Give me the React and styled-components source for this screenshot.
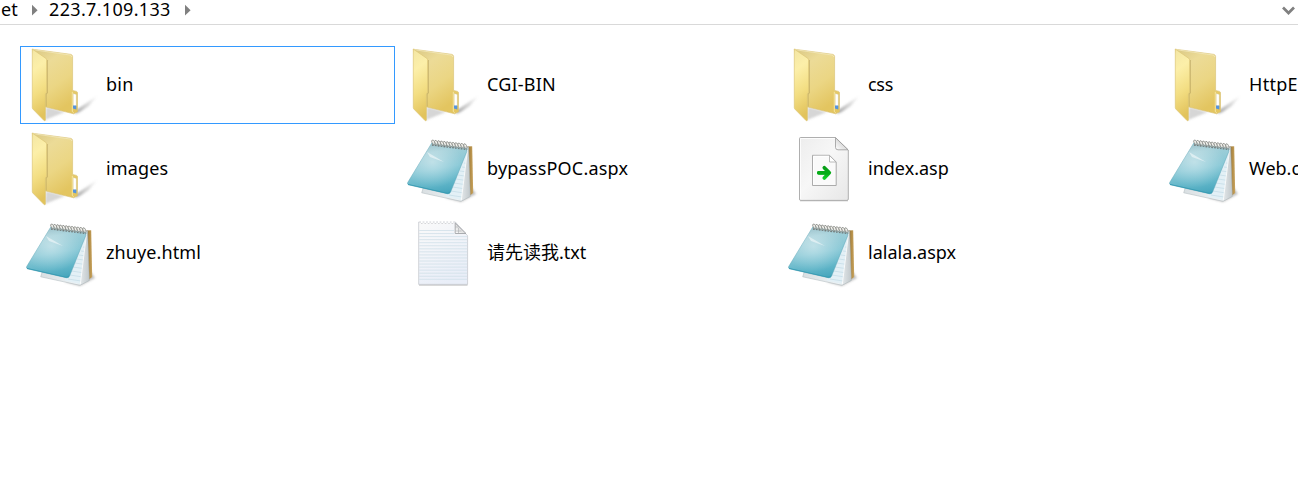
import React from "react";
import styled, { createGlobalStyle } from "styled-components";

const GlobalStyle = createGlobalStyle`
  * { box-sizing: border-box; }
  html, body { margin: 0; background: #fff; overflow: hidden; }
  body { font-family: "Noto Sans", "Noto Sans CJK SC", sans-serif; font-size: 18px; color: #000; }
`;

const Window = styled.main`
  width: 100vw;
  height: 492px;
  overflow: hidden;
  background: #fff;
`;

const AddressBar = styled.header`
  display: flex;
  align-items: flex-start;
  height: 25px;
  border-bottom: 1px solid #d9d9d9;
  padding-right: 3px;
`;

const Crumb = styled.span`
  width: ${(p) => p.$width}px;
  height: 24px;
  margin-left: ${(p) => p.$gap || 0}px;
  line-height: 18px;
  white-space: nowrap;
  letter-spacing: ${(p) => p.$tracking || 0}px;
`;

const Separator = styled.svg`
  width: 8px;
  height: 14px;
  margin: 3px 0 0 ${(p) => p.$gap}px;
  flex: none;
`;

const Chevron = styled.svg`
  width: 14px;
  height: 12px;
  margin: 5px 0 0 auto;
  flex: none;
`;

const FileGrid = styled.ul`
  list-style: none;
  margin: 0;
  padding: 21px 0 0 20px;
  display: grid;
  grid-template-columns: repeat(4, 375px);
  grid-auto-rows: 78px;
  gap: 6px;
`;

const Tile = styled.li`
  display: flex;
  align-items: center;
  outline: ${(p) => (p.$selected ? "1px solid #3399ff" : "none")};
  outline-offset: -1px;
`;

const IconArt = styled.svg`
  width: 80px;
  height: 78px;
  flex: none;
`;

const FileName = styled.span`
  margin-left: 6px;
  line-height: 24px;
  padding-bottom: 3px;
  white-space: nowrap;
  letter-spacing: ${(p) => p.$tracking || 0}px;
`;

function Gradients() {
  return (
    <svg width="0" height="0" style={{ display: "block" }} aria-hidden="true">
      <defs>
        <linearGradient id="folderBack" x1="0" y1="0" x2="0.5" y2="1">
          <stop offset="0" stopColor="#d9c783" />
          <stop offset="0.3" stopColor="#ecdb97" />
          <stop offset="0.65" stopColor="#ebd684" />
          <stop offset="1" stopColor="#e3c560" />
        </linearGradient>
        <linearGradient id="folderFlap" x1="0" y1="0" x2="0.15" y2="1">
          <stop offset="0" stopColor="#f3e6a4" />
          <stop offset="0.3" stopColor="#fcefa9" />
          <stop offset="0.65" stopColor="#f3de83" />
          <stop offset="1" stopColor="#e2c35c" />
        </linearGradient>
        <linearGradient id="folderShade" x1="0" y1="0" x2="1" y2="0">
          <stop offset="0" stopColor="#666" stopOpacity="0.6" />
          <stop offset="1" stopColor="#999" stopOpacity="0.08" />
        </linearGradient>
        <linearGradient id="padCover" x1="0.4" y1="0" x2="0.6" y2="1">
          <stop offset="0" stopColor="#8fb9c3" />
          <stop offset="0.18" stopColor="#9fced8" />
          <stop offset="0.5" stopColor="#88c8d6" />
          <stop offset="0.8" stopColor="#60b5c8" />
          <stop offset="1" stopColor="#46a5bc" />
        </linearGradient>
        <radialGradient id="padGlow" cx="0.42" cy="0.38" r="0.5">
          <stop offset="0" stopColor="#fff" stopOpacity="0.42" />
          <stop offset="1" stopColor="#fff" stopOpacity="0" />
        </radialGradient>
        <linearGradient id="padPages" x1="0" y1="0" x2="1" y2="0">
          <stop offset="0" stopColor="#d9dfe2" />
          <stop offset="0.75" stopColor="#eef2f4" />
          <stop offset="1" stopColor="#c1c8cb" />
        </linearGradient>
        <linearGradient id="padWood" x1="0" y1="0" x2="1" y2="0">
          <stop offset="0" stopColor="#80642e" />
          <stop offset="0.5" stopColor="#b18b45" />
          <stop offset="1" stopColor="#c9a560" />
        </linearGradient>
        <linearGradient id="sheet" x1="0" y1="0" x2="1" y2="1">
          <stop offset="0" stopColor="#ededed" />
          <stop offset="0.45" stopColor="#f7f7f7" />
          <stop offset="1" stopColor="#e7e7e7" />
        </linearGradient>
        <linearGradient id="fold" x1="0" y1="1" x2="1" y2="0">
          <stop offset="0" stopColor="#fff" />
          <stop offset="0.5" stopColor="#ddd" />
          <stop offset="1" stopColor="#aaa" />
        </linearGradient>
        <linearGradient id="arrow" x1="0" y1="36" x2="0" y2="50" gradientUnits="userSpaceOnUse">
          <stop offset="0" stopColor="#079a16" />
          <stop offset="0.5" stopColor="#07ac18" />
          <stop offset="1" stopColor="#16da2c" />
        </linearGradient>
        <linearGradient id="textSheet" x1="0" y1="0" x2="0.5" y2="1">
          <stop offset="0" stopColor="#fafafa" />
          <stop offset="1" stopColor="#e9eef8" />
        </linearGradient>
        <filter id="soft" x="-20%" y="-20%" width="140%" height="140%">
          <feGaussianBlur stdDeviation="1" />
        </filter>
        <filter id="glint" x="-20%" y="-20%" width="140%" height="140%">
          <feGaussianBlur stdDeviation="0.7" />
        </filter>
      </defs>
    </svg>
  );
}

function FolderIcon() {
  return (
    <IconArt viewBox="0 0 80 78">
      <path d="M56 64 L77 50 L69 60 L60 66 L55 68Z" fill="url(#folderShade)" filter="url(#soft)" />
      <path d="M26 61 L45 66 L25 74Z" fill="#777" fillOpacity="0.3" filter="url(#soft)" />
      <path d="M12.3 3.2 L50.5 8.3 Q52.6 8.7 52.6 10.5 V44.4 L56.5 45.4 Q57.5 45.8 57.5 46.7 V65.8 L53.6 67.8 L25 60.8Z" fill="url(#folderBack)" stroke="#d9bf70" strokeWidth="0.6" />
      <path d="M13 3.7 L50 9 Q51.7 9.4 51.7 11" fill="none" stroke="#f3e8bb" strokeWidth="0.8" />
      <path d="M52.3 45.8 V65.5 L53.7 66.7" fill="none" stroke="#f7e9a9" strokeWidth="0.9" />
      <path d="M53.2 47.6 L56.3 48.4 V60 H53.2Z" fill="#fff" stroke="#c7bd92" strokeWidth="0.3" />
      <path d="M53 59.5 H56.3 V63.4 L53 62.6Z" fill="#5694dd" />
      <path d="M27.3 14 V46.5 L26 48.5 V60.5" fill="none" stroke="#a28e4c" strokeOpacity="0.45" strokeWidth="1.2" />
      <path d="M12.3 3.1 L25.6 12.2 Q26.6 13 26.6 14.3 V46.2 L25.4 48 V74.3 Q25 75 24 74.5 L12.8 63 Q12.3 62.4 12.3 61.5Z" fill="url(#folderFlap)" stroke="#dcc575" strokeWidth="0.7" />
    </IconArt>
  );
}

const RINGS = Array.from({ length: 12 }, (_, i) => i);

function NotepadIcon() {
  return (
    <IconArt viewBox="0 0 80 78">
      <path d="M45 68 L60 72 L75 64 L71 58Z" fill="#777" fillOpacity="0.45" filter="url(#soft)" />
      <path d="M66.5 16.5 L71.2 16.3 L72.2 63 L67.5 66.5Z" fill="url(#padWood)" />
      <path d="M62 16 L67.6 17 L69.3 66.5 L60 71.3 L20.7 62.8 L22 58.5Z" fill="url(#padPages)" stroke="#a9b4b9" strokeWidth="0.5" />
      <path d="M66.2 20 L60.2 70 L44.5 66.4 L62 29Z" fill="#e3f0f6" />
      <path d="M63 33l2 .3M61 37l3.5.5M59 41l5 .7M57 45l6.5 1M55 49l8 1.2M53 53l9.5 1.4M51.5 57l10.5 1.6M50 61l11.5 1.8M48 65l13 2" stroke="#bcd7e3" strokeWidth="0.6" />
      <path d="M66.5 20 L60.3 70.3" stroke="#fff" strokeWidth="0.8" />
      <path d="M30.8 13 L66 18.2 L65.8 21.5 L49.6 62 Q48.8 64.2 46.5 63.8 L7.5 54.8 Q6 54.2 6.7 52.5Z" fill="url(#padCover)" stroke="#5ba4b6" strokeWidth="0.5" />
      <path d="M30.8 13 L66 18.2 L65.8 21.5 L49.6 62 Q48.8 64.2 46.5 63.8 L7.5 54.8 Q6 54.2 6.7 52.5Z" fill="url(#padGlow)" />
      <path d="M26 22 L43 32 L29 27Z" fill="#fff" fillOpacity="0.5" filter="url(#glint)" />
      <path d="M7 54.4 L46 63.3 Q48 63.8 49 61.5" fill="none" stroke="#349ab2" strokeWidth="0.9" />
      <path d="M31 15 L66 19.5" stroke="#727b7b" strokeWidth="1.4" strokeDasharray="1.7 1.2" />
      {RINGS.map((i) => (
        <ellipse key={i} cx={32.4 + i * 2.9} cy={12.4 + i * 0.34} rx="1.35" ry="2.6" transform={`rotate(-28 ${32.4 + i * 2.9} ${12.4 + i * 0.34})`} fill="#e9e8e2" fillOpacity="0.7" stroke="#8c8f8a" strokeWidth="0.8" />
      ))}
    </IconArt>
  );
}

function AspIcon() {
  return (
    <IconArt viewBox="0 0 80 78">
      <path d="M18 70.8H66" stroke="#888" strokeOpacity="0.5" />
      <path d="M18.5 7.5 H53.5 L66.3 20 V69 Q66.3 70.4 65 70.4 H18.5 Q17.5 70.4 17.5 69 V8.5 Q17.5 7.5 18.5 7.5Z" fill="url(#sheet)" stroke="#a6a6a6" strokeWidth="0.9" />
      <path d="M18.5 69V8.5H53" fill="none" stroke="#fff" strokeWidth="0.8" />
      <path d="M53.5 7.7 V17.5 Q53.6 19.8 56 19.8 H66Z" fill="url(#fold)" stroke="#999" strokeWidth="0.8" />
      <path d="M30.5 25.3 H47.5 L54.2 32 V55.5 H30.5Z" fill="#fafafa" stroke="#a3a3a3" strokeWidth="0.9" />
      <path d="M31.5 54.5V26.3H47" fill="none" stroke="#fff" />
      <path d="M47.5 25.5 V32 H54Z" fill="#fff" stroke="#aaa" strokeWidth="0.8" />
      <path d="M36.8 42.8 H46.5 M42.3 37.8 L47.3 42.8 L42.3 48" fill="none" stroke="url(#arrow)" strokeWidth="3.7" strokeLinecap="round" strokeLinejoin="round" />
      <path d="M36.8 42.75H46.5" stroke="#07ac18" strokeWidth="3.5" strokeLinecap="round" />
    </IconArt>
  );
}

const RULES = Array.from({ length: 17 }, (_, i) => 16.5 + i * 3.05);

function TextIcon() {
  return (
    <IconArt viewBox="0 0 80 78">
      <path d="M18 71H66.5" stroke="#777" strokeOpacity="0.55" />
      <path d="M17.7 8 H54.3 L66.6 21.8 V70.4 H17.7Z" fill="url(#textSheet)" stroke="#c5c8ce" strokeWidth="0.8" />
      {RULES.map((y) => (
        <path key={y} d={`M18.2 ${y}H${y < 21 ? 53 : 66.2}`} stroke="#d1dfe9" strokeWidth="0.8" />
      ))}
      <path d="M20 8.2H53" stroke="#fff" strokeWidth="2.6" strokeDasharray="1.6 1.8" />
      <path d="M20 9.5H53" stroke="#c4c6c9" strokeWidth="0.7" strokeDasharray="1.6 1.8" />
      <path d="M54.2 9 V19.5 H65Z" fill="url(#fold)" stroke="#a2a4a7" strokeWidth="0.9" />
      <path d="M54.5 13h3M54.5 17h6M57.5 14v5" stroke="#a9acb0" strokeWidth="0.6" />
    </IconArt>
  );
}

const ICONS = { folder: FolderIcon, notepad: NotepadIcon, asp: AspIcon, text: TextIcon };

const FILES = [
  { name: "bin", icon: "folder", selected: true, tracking: 0.3 },
  { name: "CGI-BIN", icon: "folder", tracking: 0.2 },
  { name: "css", icon: "folder", tracking: -0.3 },
  { name: "HttpE", icon: "folder", tracking: 0.3 },
  { name: "images", icon: "folder", tracking: 0.15 },
  { name: "bypassPOC.aspx", icon: "notepad", tracking: 0.2 },
  { name: "index.asp", icon: "asp" },
  { name: "Web.config", icon: "notepad" },
  { name: "zhuye.html", icon: "notepad", tracking: 0.1 },
  { name: "请先读我.txt", icon: "text" },
  { name: "lalala.aspx", icon: "notepad" },
];

function CrumbArrow({ gap }) {
  return (
    <Separator $gap={gap} viewBox="0 0 8 14">
      <path d="M1 1.8L6.6 7.2L1 12.6Z" fill="#808080" />
    </Separator>
  );
}

export default function App() {
  return (
    <Window>
      <GlobalStyle />
      <Gradients />
      <AddressBar>
        <Crumb $width={18} $gap={1}>et</Crumb>
        <CrumbArrow gap={12} />
        <Crumb $width={122} $gap={10} $tracking={0.33}>223.7.109.133</Crumb>
        <CrumbArrow gap={13} />
        <Chevron viewBox="0 0 14 12">
          <path d="M2 2.5L7.5 8L13 2.5" fill="none" stroke="#808080" strokeWidth="2.7" />
        </Chevron>
      </AddressBar>
      <FileGrid>
        {FILES.map(({ name, icon, selected, tracking }) => {
          const Icon = ICONS[icon];
          return (
            <Tile key={name} $selected={selected}>
              <Icon />
              <FileName $tracking={tracking}>{name}</FileName>
            </Tile>
          );
        })}
      </FileGrid>
    </Window>
  );
}
